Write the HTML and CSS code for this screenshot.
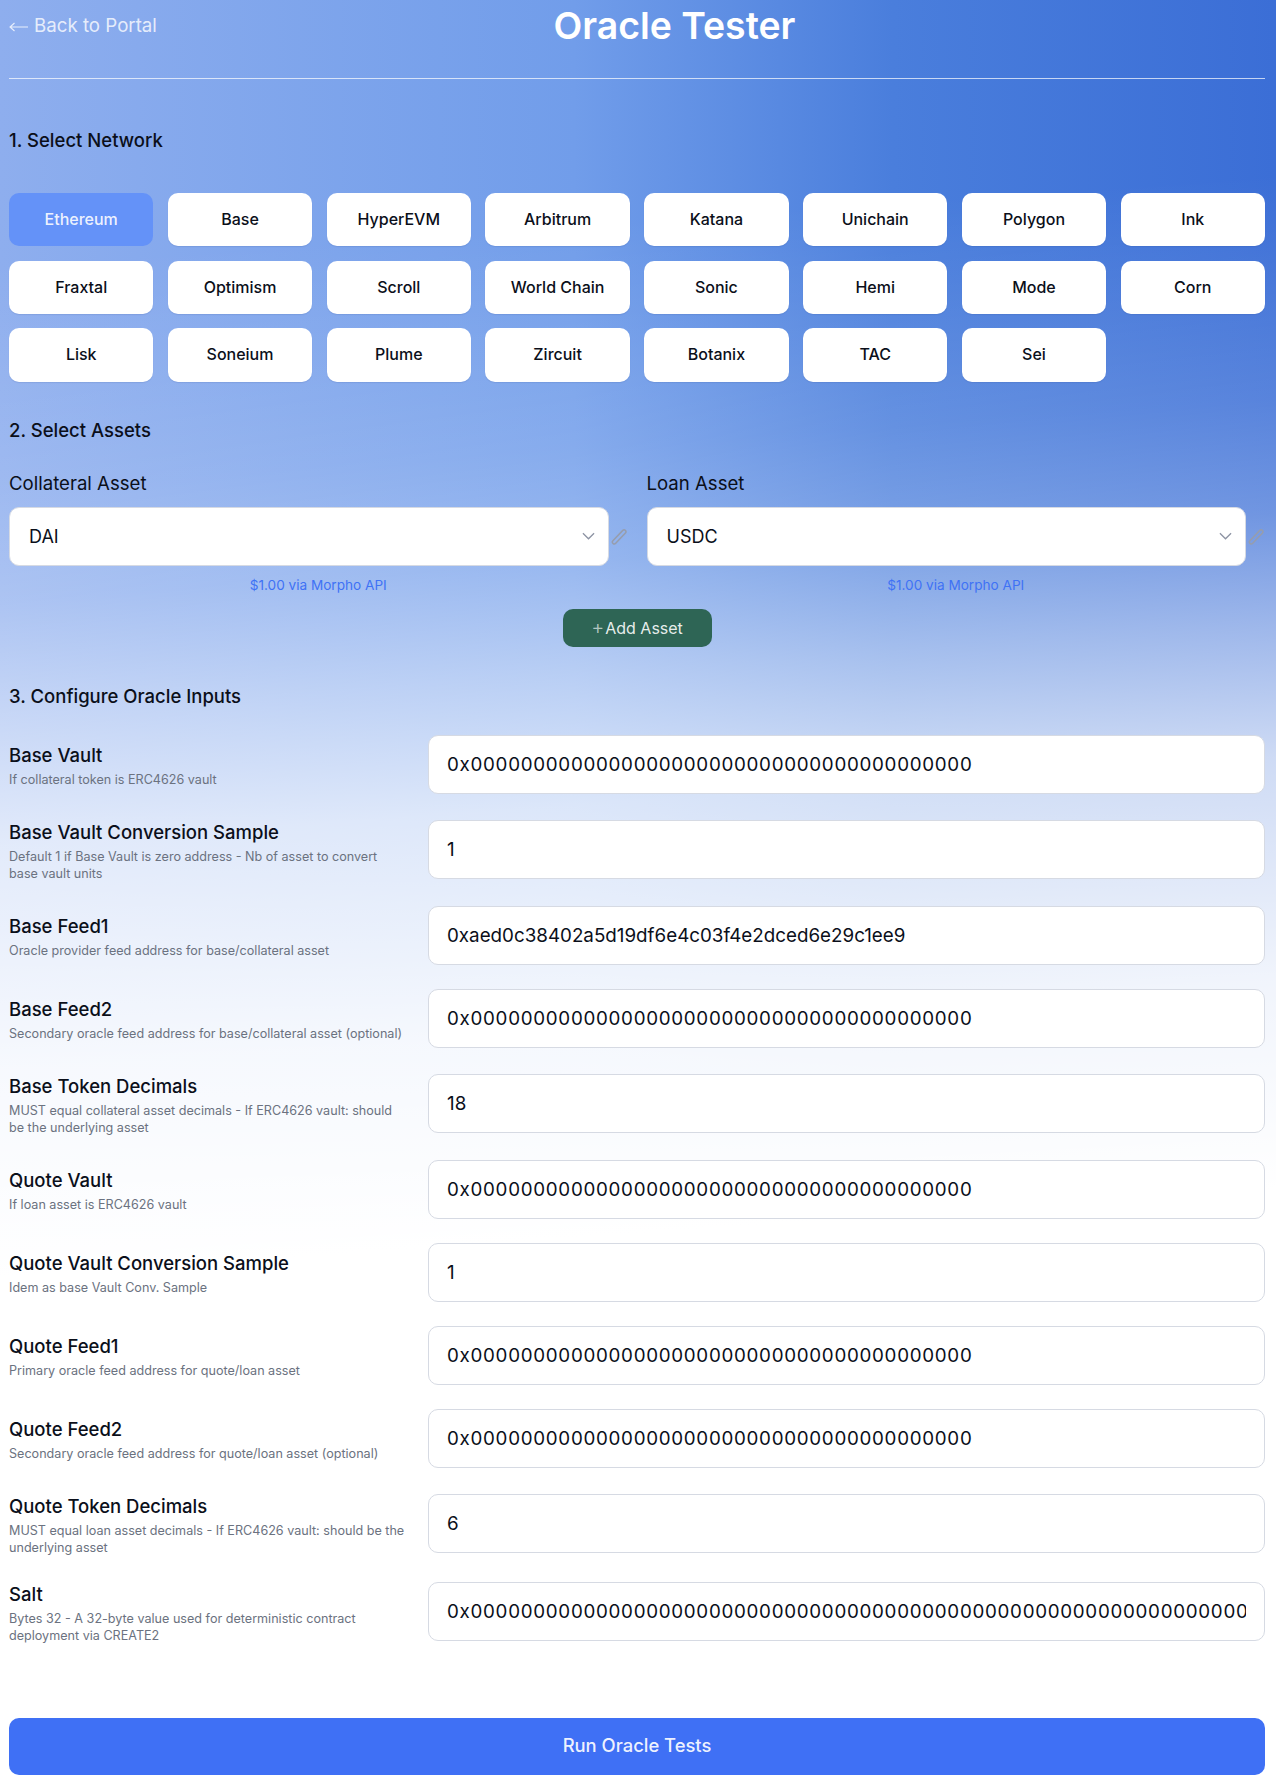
FILE: index.html
```html
<!DOCTYPE html>
<html lang="en">
<head>
<meta charset="utf-8">
<title>Oracle Tester</title>
<link rel="stylesheet" href="styles.css">
</head>
<body>
<main class="page">
  <header class="top">
    <a class="back" href="#"><svg class="arrow" viewBox="0 0 19 10"><path d="M19 5H1M5.5 1L1 5l4.5 4"/></svg>Back to Portal</a>
    <h1 class="title">Oracle Tester</h1>
    <span class="spacer"></span>
  </header>

  <h2 class="sec sec-net">1. Select Network</h2>
  <div class="nets">
    <button class="net active">Ethereum</button><button class="net">Base</button><button class="net">HyperEVM</button><button class="net">Arbitrum</button><button class="net">Katana</button><button class="net">Unichain</button><button class="net">Polygon</button><button class="net">Ink</button>
    <button class="net">Fraxtal</button><button class="net">Optimism</button><button class="net">Scroll</button><button class="net">World Chain</button><button class="net">Sonic</button><button class="net">Hemi</button><button class="net">Mode</button><button class="net">Corn</button>
    <button class="net">Lisk</button><button class="net">Soneium</button><button class="net">Plume</button><button class="net">Zircuit</button><button class="net">Botanix</button><button class="net">TAC</button><button class="net">Sei</button>
  </div>

  <h2 class="sec sec-assets">2. Select Assets</h2>
  <div class="assets">
    <div class="asset">
      <div class="asset-label">Collateral Asset</div>
      <div class="asset-row">
        <div class="select"><span>DAI</span>
          <svg class="chev" viewBox="0 0 14 8"><path d="M1 1l6 6 6-6"/></svg>
        </div>
        <svg class="pencil" viewBox="0 0 18 18"><path d="M2 13.5L12.5 2.5a2 2 0 0 1 3 2.6L5 16.2a1.9 1.9 0 0 1-3-2.7z"/></svg>
      </div>
      <div class="price">$1.00 via Morpho API</div>
    </div>
    <div class="asset">
      <div class="asset-label">Loan Asset</div>
      <div class="asset-row">
        <div class="select"><span>USDC</span>
          <svg class="chev" viewBox="0 0 14 8"><path d="M1 1l6 6 6-6"/></svg>
        </div>
        <svg class="pencil" viewBox="0 0 18 18"><path d="M2 13.5L12.5 2.5a2 2 0 0 1 3 2.6L5 16.2a1.9 1.9 0 0 1-3-2.7z"/></svg>
      </div>
      <div class="price">$1.00 via Morpho API</div>
    </div>
  </div>
  <div class="add-wrap"><button class="add"><span class="plus">+</span>Add Asset</button></div>

  <h2 class="sec sec-conf">3. Configure Oracle Inputs</h2>
  <div class="fields">
    <div class="field"><div class="info"><div class="name">Base Vault</div><div class="desc">If collateral token is ERC4626 vault</div></div><div class="input"><span class="val zero">0x0000000000000000000000000000000000000000</span></div></div>
    <div class="field"><div class="info"><div class="name">Base Vault Conversion Sample</div><div class="desc">Default 1 if Base Vault is zero address - Nb of asset to convert base vault units</div></div><div class="input"><span class="val">1</span></div></div>
    <div class="field"><div class="info"><div class="name">Base Feed1</div><div class="desc">Oracle provider feed address for base/collateral asset</div></div><div class="input"><span class="val">0xaed0c38402a5d19df6e4c03f4e2dced6e29c1ee9</span></div></div>
    <div class="field"><div class="info"><div class="name">Base Feed2</div><div class="desc">Secondary oracle feed address for base/collateral asset (optional)</div></div><div class="input"><span class="val zero">0x0000000000000000000000000000000000000000</span></div></div>
    <div class="field"><div class="info"><div class="name">Base Token Decimals</div><div class="desc">MUST equal collateral asset decimals - If ERC4626 vault: should be the underlying asset</div></div><div class="input"><span class="val">18</span></div></div>
    <div class="field"><div class="info"><div class="name">Quote Vault</div><div class="desc">If loan asset is ERC4626 vault</div></div><div class="input"><span class="val zero">0x0000000000000000000000000000000000000000</span></div></div>
    <div class="field"><div class="info"><div class="name">Quote Vault Conversion Sample</div><div class="desc">Idem as base Vault Conv. Sample</div></div><div class="input"><span class="val">1</span></div></div>
    <div class="field"><div class="info"><div class="name">Quote Feed1</div><div class="desc">Primary oracle feed address for quote/loan asset</div></div><div class="input"><span class="val zero">0x0000000000000000000000000000000000000000</span></div></div>
    <div class="field"><div class="info"><div class="name">Quote Feed2</div><div class="desc">Secondary oracle feed address for quote/loan asset (optional)</div></div><div class="input"><span class="val zero">0x0000000000000000000000000000000000000000</span></div></div>
    <div class="field"><div class="info"><div class="name">Quote Token Decimals</div><div class="desc">MUST equal loan asset decimals - If ERC4626 vault: should be the underlying asset</div></div><div class="input"><span class="val">6</span></div></div>
    <div class="field"><div class="info"><div class="name">Salt</div><div class="desc">Bytes 32 - A 32-byte value used for deterministic contract deployment via CREATE2</div></div><div class="input"><span class="val zero">0x0000000000000000000000000000000000000000000000000000000000000000</span></div></div>
  </div>

  <button class="run">Run Oracle Tests</button>
</main>
</body>
</html>
```

FILE: styles.css
```css
* { box-sizing: border-box; }
html, body { margin: 0; height: 100%; }
body {
  height: 1790px;
  overflow: hidden;
  font-family: Inter, "Liberation Sans", sans-serif;
  color: #0b0f1a;
  background:
    linear-gradient(176deg, rgba(255,255,255,0) 0%, rgba(255,255,255,0) 14%, rgba(255,255,255,.15) 26%, rgba(255,255,255,.27) 32%, rgba(255,255,255,.5) 38%, rgba(255,255,255,.75) 45%, rgba(255,255,255,.93) 57%, #fff 68%),
    linear-gradient(90deg, #8eaeee 0%, #719dea 45%, #4a7edc 70%, #3b6ed6 100%);
}
.page { padding: 0 11px 0 9px; }

.top {
  display: flex;
  justify-content: space-between;
  align-items: center;
  height: 79px;
  padding-bottom: 27px;
  border-bottom: 1px solid rgba(255,255,255,.7);
}
.back { display: flex; align-items: center; gap: 6px; color: rgba(255,255,255,.8); font-size: 18.7px; text-decoration: none; }
.arrow { width: 19px; height: 10px; margin-top: 3px; fill: none; stroke: rgba(255,255,255,.8); stroke-width: 1.1; }
.title { margin: 0; color: #fff; font-size: 37.4px; font-weight: 600; line-height: 50px; }
.spacer { width: 73px; }

.sec { margin: 0; font-size: 18.5px; font-weight: 500; line-height: 24px; }
.sec-net { margin-top: 49px; }
.sec-assets { margin-top: 36px; }
.sec-conf { margin-top: 37px; }

.nets {
  display: grid;
  grid-template-columns: repeat(8, 1fr);
  gap: 14.4px;
  margin-top: 41px;
}
.net {
  height: 53.3px;
  padding: 0 0 1.5px;
  border: 0;
  border-radius: 10px;
  background: #fff;
  box-shadow: 0 1px 1px rgba(30,60,120,.12);
  color: #0b0f1a;
  font: 500 16px Inter, sans-serif;
}
.net.active { background: #6492f8; color: rgba(255,255,255,.9); box-shadow: none; }

.assets { display: grid; grid-template-columns: 1fr 1fr; gap: 19px; margin-top: 29px; }
.asset-label { font-size: 18.6px; line-height: 24px; }
.asset-row { display: flex; align-items: center; gap: 2px; margin-top: 12px; }
.select {
  flex: 1;
  height: 59px;
  display: flex;
  align-items: center;
  justify-content: space-between;
  padding: 0 13px 0 19px;
  background: #fff;
  border: 1px solid #d6dae3;
  border-radius: 10px;
  font-size: 18px;
}
.chev { width: 13px; height: 8px; fill: none; stroke: #8d93a3; stroke-width: 1.4; }
.pencil { width: 17px; height: 17px; fill: none; stroke: #969dad; stroke-width: 1.6; }
.price { margin-top: 11px; text-align: center; color: #3f72f5; font-size: 13.6px; line-height: 17px; }

.add-wrap { display: flex; justify-content: center; margin-top: 15px; }
.add {
  width: 149px;
  height: 38px;
  border: 0;
  border-radius: 10px;
  background: #2e6555;
  color: rgba(255,255,255,.9);
  font: 400 16px Inter, sans-serif;
}
.plus { margin-right: 1px; color: rgba(255,255,255,.65); font-size: 20px; font-weight: 300; line-height: 16px; }

.fields { display: flex; flex-direction: column; gap: 24px; margin-top: 27px; }
.field { display: grid; grid-template-columns: 418.5px 1fr; align-items: center; }
.info { padding: 2px 20px 0 0; }
.name { font-size: 18.5px; font-weight: 500; line-height: 24px; }
.desc { margin-top: 4px; font-size: 12.6px; line-height: 17px; color: #6b7280; }
.input {
  height: 59px;
  min-width: 0;
  display: flex;
  align-items: center;
  padding: 0 18px 0 18.5px;
  background: #fff;
  border: 1px solid #d6dae3;
  border-radius: 10px;
  font-size: 18.8px;
}
.val { display: block; min-width: 0; white-space: nowrap; overflow: hidden; }
.zero { letter-spacing: .7px; }
.run {
  display: block;
  width: 100%;
  height: 57px;
  margin-top: 74px;
  padding-bottom: 3px;
  border: 0;
  border-radius: 10px;
  background: #3f70f5;
  color: rgba(255,255,255,.92);
  font: 500 18.4px Inter, sans-serif;
}
```
